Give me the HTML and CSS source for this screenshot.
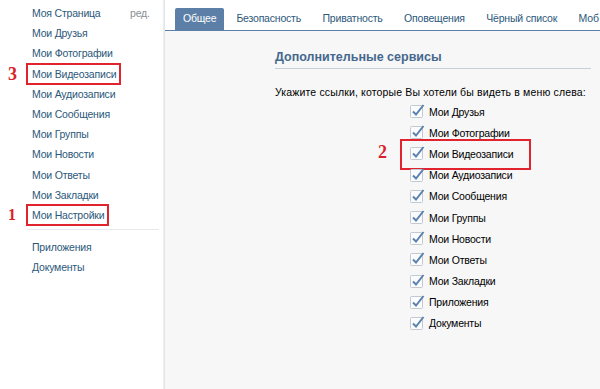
FILE: index.html
```html
<!DOCTYPE html>
<html lang="ru">
<head>
<meta charset="utf-8">
<title>Настройки</title>
<link rel="stylesheet" href="styles.css">
</head>
<body>
<div class="page">
  <aside class="sidebar">
    <ul class="menu">
      <li><a>Моя Страница</a><span class="edit">ред.</span></li>
      <li><a>Мои Друзья</a></li>
      <li><a>Мои Фотографии</a></li>
      <li class="hl hl-video"><span class="num">3</span><a>Мои Видеозаписи</a></li>
      <li><a>Мои Аудиозаписи</a></li>
      <li><a>Мои Сообщения</a></li>
      <li><a>Мои Группы</a></li>
      <li><a>Мои Новости</a></li>
      <li><a>Мои Ответы</a></li>
      <li><a>Мои Закладки</a></li>
      <li class="hl hl-settings"><span class="num">1</span><a>Мои Настройки</a></li>
    </ul>
    <div class="sep"></div>
    <ul class="menu">
      <li><a>Приложения</a></li>
      <li><a>Документы</a></li>
    </ul>
  </aside>
  <main class="main">
    <nav class="tabs">
      <a class="tab active">Общее</a>
      <a class="tab">Безопасность</a>
      <a class="tab">Приватность</a>
      <a class="tab">Оповещения</a>
      <a class="tab">Чёрный список</a>
      <a class="tab">Моб</a>
    </nav>
    <section class="section">
      <h2 class="title">Дополнительные сервисы</h2>
      <p class="desc">Укажите ссылки, которые Вы хотели бы видеть в меню слева:</p>
      <ul class="checks">
        <li><span class="cb"><svg viewBox="0 0 16 16" width="16" height="16"><rect x="0.5" y="3.5" width="12" height="12" rx="1" fill="#fbfcfd" stroke="#c3c9d1"/><path d="M3 9.5 L6 12.5 L13.5 3" fill="none" stroke="#5a82ad" stroke-width="2"/></svg></span>Мои Друзья</li>
        <li><span class="cb"><svg viewBox="0 0 16 16" width="16" height="16"><rect x="0.5" y="3.5" width="12" height="12" rx="1" fill="#fbfcfd" stroke="#c3c9d1"/><path d="M3 9.5 L6 12.5 L13.5 3" fill="none" stroke="#5a82ad" stroke-width="2"/></svg></span>Мои Фотографии</li>
        <li class="hl2"><span class="num">2</span><span class="cb"><svg viewBox="0 0 16 16" width="16" height="16"><rect x="0.5" y="3.5" width="12" height="12" rx="1" fill="#fbfcfd" stroke="#c3c9d1"/><path d="M3 9.5 L6 12.5 L13.5 3" fill="none" stroke="#5a82ad" stroke-width="2"/></svg></span>Мои Видеозаписи</li>
        <li><span class="cb"><svg viewBox="0 0 16 16" width="16" height="16"><rect x="0.5" y="3.5" width="12" height="12" rx="1" fill="#fbfcfd" stroke="#c3c9d1"/><path d="M3 9.5 L6 12.5 L13.5 3" fill="none" stroke="#5a82ad" stroke-width="2"/></svg></span>Мои Аудиозаписи</li>
        <li><span class="cb"><svg viewBox="0 0 16 16" width="16" height="16"><rect x="0.5" y="3.5" width="12" height="12" rx="1" fill="#fbfcfd" stroke="#c3c9d1"/><path d="M3 9.5 L6 12.5 L13.5 3" fill="none" stroke="#5a82ad" stroke-width="2"/></svg></span>Мои Сообщения</li>
        <li><span class="cb"><svg viewBox="0 0 16 16" width="16" height="16"><rect x="0.5" y="3.5" width="12" height="12" rx="1" fill="#fbfcfd" stroke="#c3c9d1"/><path d="M3 9.5 L6 12.5 L13.5 3" fill="none" stroke="#5a82ad" stroke-width="2"/></svg></span>Мои Группы</li>
        <li><span class="cb"><svg viewBox="0 0 16 16" width="16" height="16"><rect x="0.5" y="3.5" width="12" height="12" rx="1" fill="#fbfcfd" stroke="#c3c9d1"/><path d="M3 9.5 L6 12.5 L13.5 3" fill="none" stroke="#5a82ad" stroke-width="2"/></svg></span>Мои Новости</li>
        <li><span class="cb"><svg viewBox="0 0 16 16" width="16" height="16"><rect x="0.5" y="3.5" width="12" height="12" rx="1" fill="#fbfcfd" stroke="#c3c9d1"/><path d="M3 9.5 L6 12.5 L13.5 3" fill="none" stroke="#5a82ad" stroke-width="2"/></svg></span>Мои Ответы</li>
        <li><span class="cb"><svg viewBox="0 0 16 16" width="16" height="16"><rect x="0.5" y="3.5" width="12" height="12" rx="1" fill="#fbfcfd" stroke="#c3c9d1"/><path d="M3 9.5 L6 12.5 L13.5 3" fill="none" stroke="#5a82ad" stroke-width="2"/></svg></span>Мои Закладки</li>
        <li><span class="cb"><svg viewBox="0 0 16 16" width="16" height="16"><rect x="0.5" y="3.5" width="12" height="12" rx="1" fill="#fbfcfd" stroke="#c3c9d1"/><path d="M3 9.5 L6 12.5 L13.5 3" fill="none" stroke="#5a82ad" stroke-width="2"/></svg></span>Приложения</li>
        <li><span class="cb"><svg viewBox="0 0 16 16" width="16" height="16"><rect x="0.5" y="3.5" width="12" height="12" rx="1" fill="#fbfcfd" stroke="#c3c9d1"/><path d="M3 9.5 L6 12.5 L13.5 3" fill="none" stroke="#5a82ad" stroke-width="2"/></svg></span>Документы</li>
      </ul>
    </section>
  </main>
</div>
</body>
</html>
```

FILE: styles.css
```css
* { box-sizing: border-box; }
html, body { margin: 0; padding: 0; }
body {
  width: 600px;
  height: 389px;
  overflow: hidden;
  background: #fff;
  font-family: "Liberation Sans", Arial, sans-serif;
  font-size: 10.5px;
  letter-spacing: -0.2px;
  color: #000;
}
.page {
  display: flex;
  height: 389px;
}
.sidebar {
  width: 164px;
  flex: none;
  background: #fff;
  border-right: 1px solid #eceef1;
  padding-top: 3px;
}
.menu {
  list-style: none;
  margin: 0;
  padding: 0;
}
.menu li {
  position: relative;
  height: 20.2px;
  line-height: 20.2px;
  padding-left: 32px;
  color: #2b587a;
  white-space: nowrap;
}
.menu a { color: #2b587a; }
.edit {
  position: absolute;
  left: 130px;
  color: #8a8f96;
}
.sep {
  height: 1px;
  background: #e7e9ec;
  margin: 4px 4px 7px 27px;
}
.hl a {
  position: relative;
  display: inline-block;
  height: 20.2px;
}
.hl a::before {
  content: "";
  position: absolute;
  left: -6px;
  right: -5px;
  top: -1px;
  bottom: -1px;
  border: 2px solid #e0232c;
}
.num {
  position: absolute;
  font-family: "Liberation Serif", serif;
  font-weight: bold;
  color: #d8232a;
  font-size: 18px;
  letter-spacing: 0;
}
.hl .num { left: 8px; top: 0; }
.hl-settings .num { font-size: 16px; left: 8px; }
.main {
  flex: 1;
  background: #f7f7f7;
  border-left: 1px solid #e3e5e8;
  display: flex;
  flex-direction: column;
  min-width: 0;
}
.tabs {
  display: flex;
  height: 31px;
  align-items: flex-end;
  background: #fff;
  border-bottom: 1px solid #5b7fa6;
  padding-left: 10px;
  white-space: nowrap;
  overflow: hidden;
}
.tab {
  flex: none;
  height: 22px;
  line-height: 21px;
  padding: 0 8px;
  margin-right: 5.5px;
  color: #2b587a;
  border-radius: 2px 2px 0 0;
}
.tab.active {
  background: #5b7fa6;
  color: #fff;
  margin-right: 4px;
}
.section {
  margin-left: 110px;
  width: 316px;
  padding-top: 18px;
}
.title {
  margin: 0;
  font-size: 12.5px;
  font-weight: bold;
  color: #45688e;
  padding-bottom: 3px;
  border-bottom: 1px solid #c6ced8;
  line-height: 16px;
  letter-spacing: 0;
}
.desc {
  margin: 16px 0 2px;
  line-height: 14px;
  letter-spacing: 0.15px;
  white-space: nowrap;
}
.checks {
  list-style: none;
  margin: 0;
  padding: 0 0 0 135px;
}
.checks li {
  position: relative;
  display: flex;
  align-items: center;
  height: 21.2px;
  color: #000;
  white-space: nowrap;
}
.cb {
  width: 19px;
  height: 16px;
  flex: none;
  margin-top: -3px;
}
.cb svg { display: block; }
.hl2::before {
  content: "";
  position: absolute;
  left: -10px;
  width: 127px;
  top: -4px;
  height: 27px;
  border: 2px solid #e0232c;
}
.hl2 .num {
  left: -32px;
  top: -1px;
}
```
